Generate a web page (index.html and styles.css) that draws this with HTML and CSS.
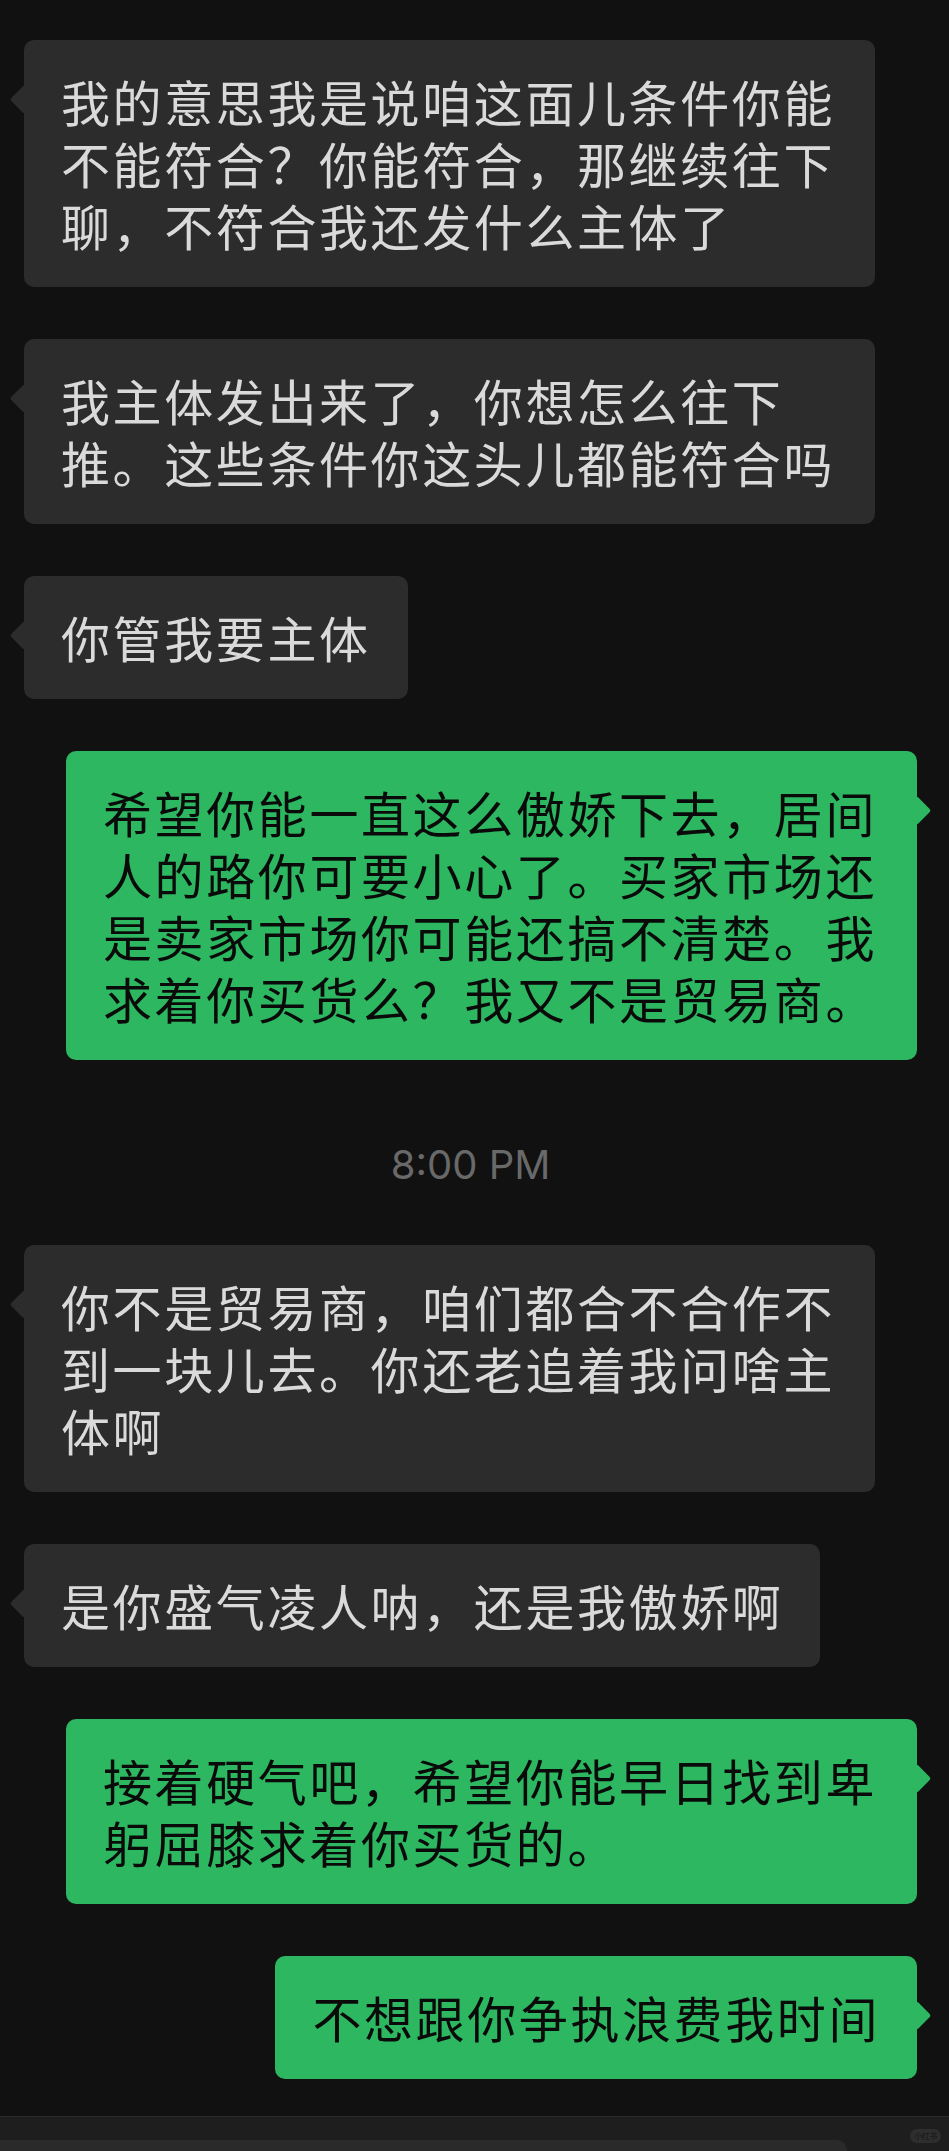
FILE: index.html
```html
<!DOCTYPE html>
<html lang="zh-CN">
<head>
<meta charset="utf-8">
<title>聊天记录</title>
<link rel="stylesheet" href="styles.css">
</head>
<body>
<main class="chat">
  <div class="row in"><div class="bubble">我的意思我是说咱这面儿条件你能不能符合？你能符合，那继续往下聊，不符合我还发什么主体了</div></div>
  <div class="row in"><div class="bubble">我主体发出来了，你想怎么往下推。这些条件你这头儿都能符合吗</div></div>
  <div class="row in"><div class="bubble">你管我要主体</div></div>
  <div class="row out"><div class="bubble">希望你能一直这么傲娇下去，居间人的路你可要小心了。买家市场还是卖家市场你可能还搞不清楚。我求着你买货么？我又不是贸易商。</div></div>
  <div class="time">8:00 PM</div>
  <div class="row in"><div class="bubble">你不是贸易商，咱们都合不合作不到一块儿去。你还老追着我问啥主体啊</div></div>
  <div class="row in"><div class="bubble">是你盛气凌人呐，还是我傲娇啊</div></div>
  <div class="row out"><div class="bubble">接着硬气吧，希望你能早日找到卑躬屈膝求着你买货的。</div></div>
  <div class="row out"><div class="bubble">不想跟你争执浪费我时间</div></div>
</main>
<footer class="bar">
  <div class="input"></div>
  <span class="mark">小红书</span>
</footer>
</body>
</html>
```
FILE: styles.css
```css
html, body {
  margin: 0;
  padding: 0;
  background: #111111;
}

body {
  font-family: "Noto Sans CJK SC", "Noto Sans", sans-serif;
  overflow: hidden;
}

.chat {
  display: flex;
  flex-direction: column;
  gap: 52px;
  padding: 40px 0 37px;
}

.row {
  display: flex;
}

.row.in {
  justify-content: flex-start;
  padding-left: 24px;
}

.row.out {
  justify-content: flex-end;
  padding-right: 32px;
}

.bubble {
  position: relative;
  box-sizing: border-box;
  max-width: 851px;
  padding: 30px 37px 31px 37px;
  border-radius: 10px;
  font-size: 49px;
  letter-spacing: 2.6px;
  line-height: 62px;
  word-break: break-all;
}

.in .bubble {
  background: #2c2c2c;
  color: #dadada;
}

.out .bubble {
  background: #2cb760;
  color: #0a0a0a;
}

.bubble::before {
  content: "";
  position: absolute;
  top: 49px;
  width: 21px;
  height: 21px;
  border-radius: 3px;
  transform: rotate(45deg);
}

.in .bubble::before {
  left: -10px;
  background: #2c2c2c;
}

.out .bubble::before {
  right: -10px;
  background: #2cb760;
}

.time {
  margin: 29px 0 4px;
  text-align: center;
  font-family: Inter, "Liberation Sans", sans-serif;
  font-size: 40px;
  line-height: 48px;
  color: #696969;
  padding-right: 8px;
}

.bar {
  position: relative;
  height: 35px;
  overflow: hidden;
  background: #1e1e1e;
  border-top: 1px solid #2b2b2b;
}

.input {
  margin-top: 23px;
  width: 847px;
  height: 40px;
  background: #2a2a2a;
  border-top-right-radius: 10px;
}

.mark {
  position: absolute;
  top: 12px;
  right: 8px;
  width: 31px;
  height: 14px;
  border-radius: 7px;
  background: #2e2e2e;
  color: #141414;
  font-size: 8px;
  line-height: 14px;
  text-align: center;
  letter-spacing: -0.5px;
}
```
